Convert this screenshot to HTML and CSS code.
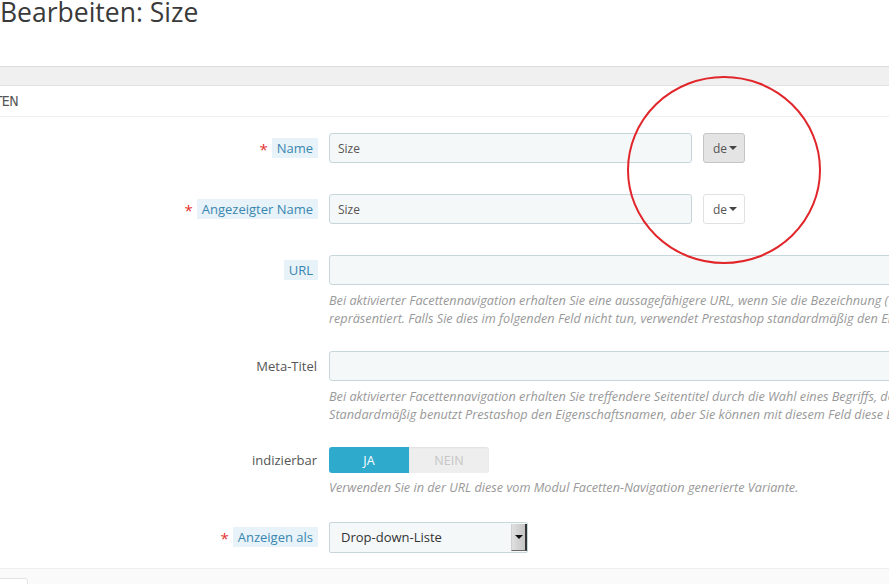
FILE: index.html
```html
<!DOCTYPE html>
<html lang="de">
<head>
    <meta charset="UTF-8">
    <title>Bearbeiten: Size</title>
    <link rel="stylesheet" href="styles.css">
</head>
<body>
    <!-- Page title -->
    <h1 class="page-title">Bearbeiten: Size</h1>
    <div class="toolbar"></div>

    <!-- Attribute panel -->
    <div class="panel">
        <div class="panel-heading">
            <div class="heading-title"><span>Eigenschaften</span></div>
        </div>

        <form class="form">
            <div class="form-group">
                <div class="control-label"><span class="required">*</span><span class="label-tooltip">Name</span></div>
                <div class="controls lang-row">
                    <input class="field field-short" type="text" value="Size">
                    <button type="button" class="lang-btn active">de <span class="caret"></span></button>
                </div>
            </div>

            <div class="form-group">
                <div class="control-label"><span class="required">*</span><span class="label-tooltip">Angezeigter Name</span></div>
                <div class="controls lang-row">
                    <input class="field field-short" type="text" value="Size">
                    <button type="button" class="lang-btn">de <span class="caret"></span></button>
                </div>
            </div>

            <div class="form-group has-help">
                <div class="control-label"><span class="label-tooltip">URL</span></div>
                <div class="controls">
                    <input class="field field-wide" type="text">
                    <p class="help-block">Bei aktivierter Facettennavigation erhalten Sie eine aussagefähigere URL, wenn Sie die Bezeichnung (Wort) wählen, die diese Eigenschaft am besten<br>repräsentiert. Falls Sie dies im folgenden Feld nicht tun, verwendet Prestashop standardmäßig den Eigenschaftsnamen.</p>
                </div>
            </div>

            <div class="form-group has-help">
                <div class="control-label"><span class="plain-label">Meta-Titel</span></div>
                <div class="controls">
                    <input class="field field-wide" type="text">
                    <p class="help-block">Bei aktivierter Facettennavigation erhalten Sie treffendere Seitentitel durch die Wahl eines Begriffs, der diese Eigenschaft am besten beschreibt.<br>Standardmäßig benutzt Prestashop den Eigenschaftsnamen, aber Sie können mit diesem Feld diese Einstellung ändern.</p>
                </div>
            </div>

            <div class="form-group has-help switch-group">
                <div class="control-label"><span class="plain-label">indizierbar</span></div>
                <div class="controls">
                    <div class="switch">
                        <span class="switch-on">Ja</span>
                        <span class="switch-off">Nein</span>
                    </div>
                    <p class="help-block">Verwenden Sie in der URL diese vom Modul Facetten-Navigation generierte Variante.</p>
                </div>
            </div>

            <div class="form-group last">
                <div class="control-label"><span class="required">*</span><span class="label-tooltip">Anzeigen als</span></div>
                <div class="controls">
                    <div class="select">
                        <span class="select-value">Drop-down-Liste</span>
                        <span class="select-arrow"><span class="caret dark"></span></span>
                    </div>
                </div>
            </div>
        </form>

        <div class="panel-footer">
            <span class="btn-back"></span>
        </div>
    </div>

    <!-- Red annotation circle -->
    <svg class="marker" width="196" height="190" viewBox="0 0 196 190">
        <ellipse cx="98" cy="95" rx="96" ry="93" fill="none" stroke="#e0262a" stroke-width="2"/>
    </svg>
</body>
</html>
```

FILE: styles.css
```css
/* General */
* {
    box-sizing: border-box;
}

body {
    margin: 0;
    padding: 0;
    font-family: 'Open Sans', 'DejaVu Sans', sans-serif;
    background: #fff;
    color: #555;
    overflow: hidden;
    position: relative;
    height: 584px;
}

.page-title {
    margin: -3px 0 39px 0;
    font-size: 26.5px;
    line-height: 30px;
    font-weight: 400;
    color: #3a3a3a;
}

.toolbar {
    height: 20px;
    background: #f0f0f0;
    border-top: 1px solid #dcdcdc;
    border-bottom: 1px solid #e2e2e2;
}

/* Panel */
.panel {
    margin-left: -20px;
    margin-right: -20px;
}

.panel-heading {
    height: 31px;
    border-bottom: 1px solid #eee;
}

.heading-title {
    width: 38px;
    height: 30px;
    display: flex;
    justify-content: flex-end;
    align-items: center;
    white-space: nowrap;
}

.heading-title span {
    font-family: 'DejaVu Sans Condensed', 'DejaVu Sans', sans-serif;
    font-size: 14px;
    text-transform: uppercase;
    color: #555;
    letter-spacing: -0.6px;
}

/* Form */
.form {
    padding: 16px 0 15px 0;
}

.form-group {
    display: grid;
    grid-template-columns: 338px 1fr;
    column-gap: 11px;
    margin-bottom: 31px;
}

.form-group.has-help {
    margin-bottom: 24px;
}

.form-group.switch-group {
    margin-bottom: 26px;
}

.form-group.last {
    margin-bottom: 0;
}

.control-label {
    display: flex;
    justify-content: flex-end;
    align-items: flex-start;
    padding-top: 5px;
    font-size: 13px;
    line-height: 20px;
}

.switch-group .control-label {
    padding-top: 3px;
}

.required {
    color: #e42f2f;
    font-size: 15px;
    margin-right: 4px;
    line-height: 22px;
}

.label-tooltip {
    background: #e8f3f9;
    color: #3886b0;
    padding: 0 5px;
}

.plain-label {
    color: #555;
    margin-right: 1px;
}

.lang-row {
    display: flex;
    align-items: center;
}

.field {
    height: 30px;
    padding: 0 8px;
    background: #f5f8f9;
    border: 1px solid #c7d6db;
    border-radius: 3px;
    font-family: 'Open Sans', sans-serif;
    font-size: 12px;
    color: #555;
    display: block;
}

.field-short {
    width: 363px;
}

.field-wide {
    width: 700px;
}

.lang-btn {
    margin-left: 11px;
    width: 42px;
    height: 30px;
    padding: 0 0 0 2px;
    background: #fff;
    border: 1px solid #e1e1e1;
    border-radius: 3px;
    font-family: 'Open Sans', sans-serif;
    font-size: 12px;
    color: #555;
    display: flex;
    align-items: center;
    justify-content: center;
    gap: 2px;
}

.lang-btn.active {
    background: #e4e4e4;
    border-color: #c4c4c4;
}

.caret {
    display: inline-block;
    width: 0;
    height: 0;
    border-top: 4px solid #444;
    border-left: 4px solid transparent;
    border-right: 4px solid transparent;
}

.caret.dark {
    border-top-color: #111;
}

.help-block {
    margin: 6px 0 0 0;
    font-size: 12.7px;
    line-height: 18px;
    font-style: italic;
    color: #999;
    white-space: nowrap;
}

.switch-group .help-block {
    margin-top: 5px;
}

/* Yes / no switch */
.switch {
    display: flex;
    width: 160px;
    height: 26px;
    border-radius: 3px;
    overflow: hidden;
    font-size: 12.5px;
    text-transform: uppercase;
}

.switch span {
    flex: 1;
    display: flex;
    align-items: center;
    justify-content: center;
}

.switch-on {
    background: #2eaacd;
    color: #fff;
}

.switch-off {
    background: #eee;
    color: #c6c6c6;
    box-shadow: inset 0 1px 2px rgba(0, 0, 0, 0.06);
}

/* Select */
.select {
    width: 199px;
    height: 31px;
    background: #f5f8f9;
    border: 1px solid #c7d6db;
    border-radius: 2px;
    display: flex;
    align-items: stretch;
}

.select-value {
    flex: 1;
    padding-left: 11px;
    font-size: 13px;
    line-height: 29px;
    color: #333;
}

.select-arrow {
    width: 16px;
    margin: 1px 0;
    background: linear-gradient(to right, #e0e0e0, #c4c4c4);
    border-left: 1px solid #d0d0d0;
    border-right: 2px solid #333;
    border-bottom: 1px solid #666;
    display: flex;
    align-items: center;
    justify-content: center;
}

/* Footer */
.panel-footer {
    height: 40px;
    background: #fafafa;
    border-top: 1px solid #eee;
    padding: 9px 0 0 0;
}

.btn-back {
    display: block;
    margin-left: 8px;
    width: 40px;
    height: 30px;
    background: #fff;
    border: 1px solid #e4e4e4;
    border-radius: 3px;
}

/* Annotation */
.marker {
    position: absolute;
    left: 626px;
    top: 75px;
}
```
